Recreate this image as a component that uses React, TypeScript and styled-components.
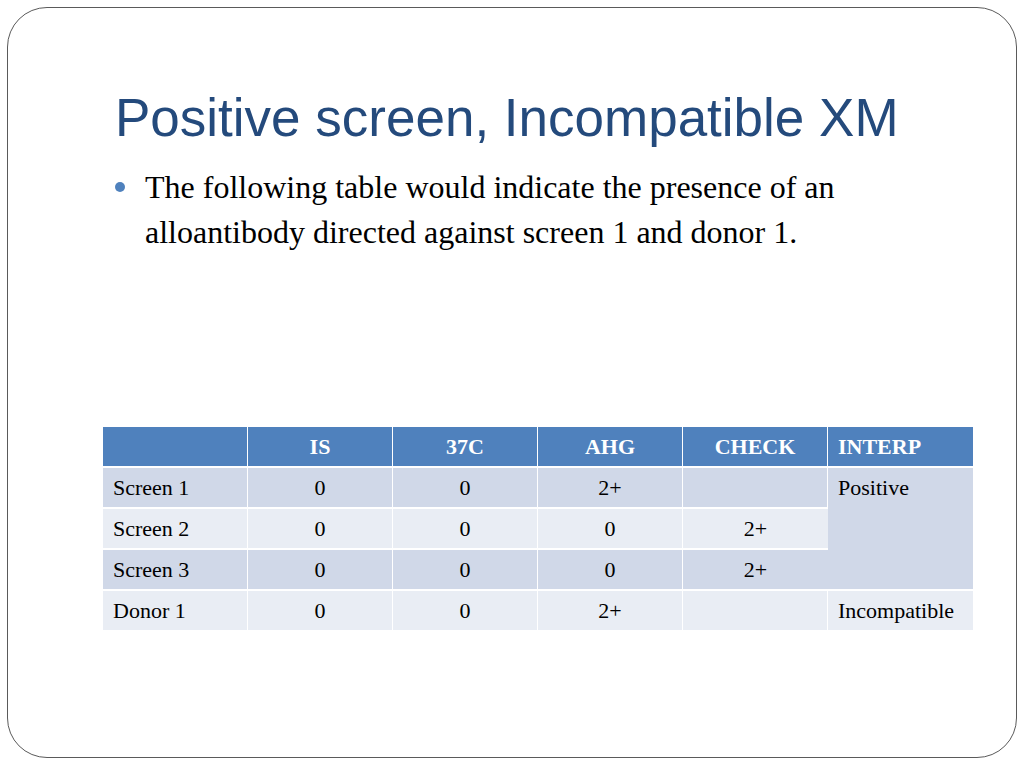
import React from 'react';
import styled, { createGlobalStyle } from 'styled-components';

const GlobalStyle = createGlobalStyle`
  html, body {
    margin: 0;
    padding: 0;
    background: #ffffff;
  }
`;

const Frame = styled.div`
  box-sizing: border-box;
  margin: 7px;
  width: 1010px;
  height: 751px;
  border: 1px solid #5a5a5a;
  border-radius: 40px;
  padding: 80px 0 0 107px;
`;

const Title = styled.h1`
  margin: 0;
  font-family: "Liberation Sans", Arial, sans-serif;
  font-weight: normal;
  font-size: 53px;
  line-height: 60px;
  color: #244a7c;
`;

const BulletList = styled.ul`
  list-style: none;
  margin: 17px 0 0 0;
  padding: 0;
  width: 780px;
`;

const Bullet = styled.li`
  position: relative;
  padding-left: 30px;
  font-family: "Liberation Serif", "Times New Roman", serif;
  font-size: 32px;
  line-height: 45px;
  color: #000;

  &::before {
    content: '';
    position: absolute;
    left: 0;
    top: 17px;
    width: 10px;
    height: 10px;
    border-radius: 50%;
    background: #4f81bd;
  }
`;

const Table = styled.table`
  margin: 172px 0 0 -12px;
  width: 870px;
  border-collapse: separate;
  border-spacing: 0;
  font-family: "Liberation Serif", "Times New Roman", serif;
  font-size: 22px;
  table-layout: fixed;
`;

const Head = styled.th<{ align?: string }>`
  height: 39px;
  padding: 0 10px;
  background: #4f81bd;
  color: #fff;
  font-weight: bold;
  text-align: ${p => p.align || 'center'};
  border-right: 1px solid #fff;
  border-bottom: 2px solid #fff;
  &:last-child { border-right: none; }
`;

const Cell = styled.td<{ band: boolean; align?: string; top?: boolean }>`
  height: 39px;
  padding: 0 10px;
  line-height: 39px;
  background: ${p => (p.band ? '#d0d8e8' : '#e9edf4')};
  color: #000;
  text-align: ${p => p.align || 'center'};
  vertical-align: ${p => (p.top ? 'top' : 'middle')};
  border-right: 1px solid #fff;
  border-bottom: 2px solid #fff;
  &:last-child { border-right: none; }
`;

const rows = [
  { name: 'Screen 1', v: ['0', '0', '2+', ''] },
  { name: 'Screen 2', v: ['0', '0', '0', '2+'] },
  { name: 'Screen 3', v: ['0', '0', '0', '2+'] },
  { name: 'Donor 1', v: ['0', '0', '2+', ''] },
];

export default function App() {
  return (
    <>
      <GlobalStyle />
      <Frame>
        <Title>Positive screen, Incompatible XM</Title>
        <BulletList>
          <Bullet>
            The following table would indicate the presence of an alloantibody directed against screen 1 and donor 1.
          </Bullet>
        </BulletList>
        <Table>
          <thead>
            <tr>
              <Head />
              <Head>IS</Head>
              <Head>37C</Head>
              <Head>AHG</Head>
              <Head>CHECK</Head>
              <Head align="left">INTERP</Head>
            </tr>
          </thead>
          <tbody>
            {rows.map((r, i) => {
              const band = i % 2 === 0;
              return (
                <tr key={r.name}>
                  <Cell band={band} align="left">{r.name}</Cell>
                  {r.v.map((x, j) => (
                    <Cell key={j} band={band}>{x}</Cell>
                  ))}
                  {i === 0 && (
                    <Cell band rowSpan={3} align="left" top>Positive</Cell>
                  )}
                  {i === 3 && <Cell band={false} align="left">Incompatible</Cell>}
                </tr>
              );
            })}
          </tbody>
        </Table>
      </Frame>
    </>
  );
}
